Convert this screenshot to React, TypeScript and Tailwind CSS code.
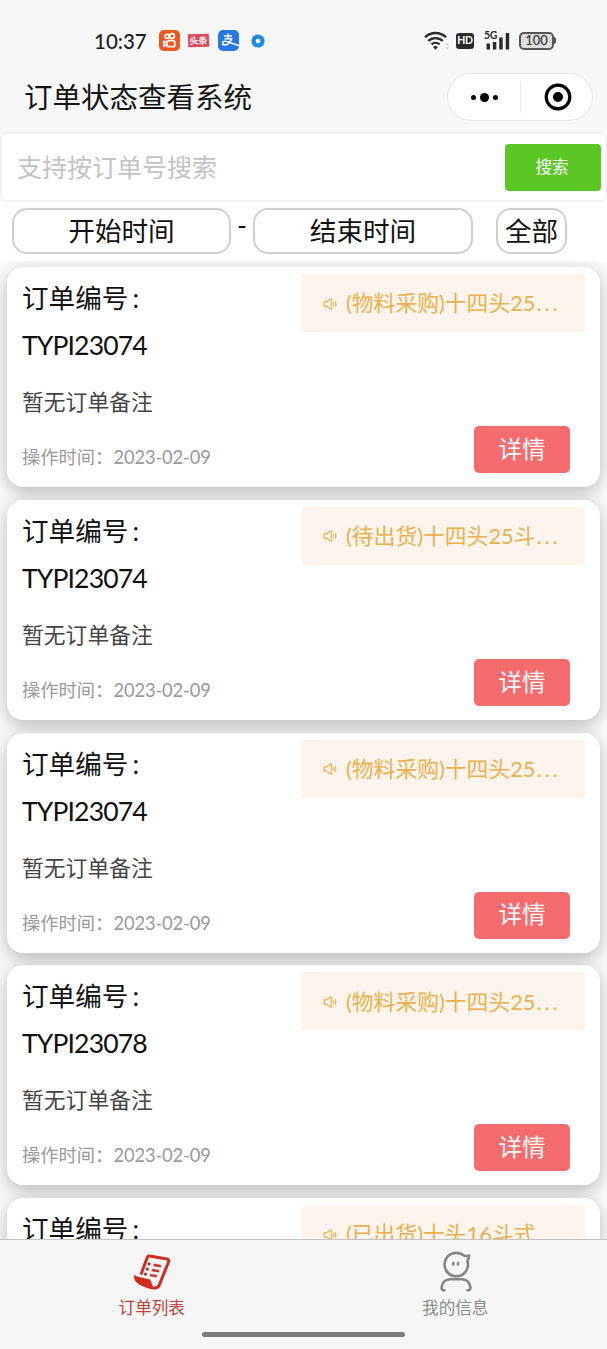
type Order = {
  id?: string;
  status: string;
  more?: boolean;
  remark?: string;
  date?: string;
};

const orders: Order[] = [
  { id: 'TYPI23074', status: '(物料采购)十四头25', more: true, remark: '暂无订单备注', date: '2023-02-09' },
  { id: 'TYPI23074', status: '(待出货)十四头25斗', more: true, remark: '暂无订单备注', date: '2023-02-09' },
  { id: 'TYPI23074', status: '(物料采购)十四头25', more: true, remark: '暂无订单备注', date: '2023-02-09' },
  { id: 'TYPI23078', status: '(物料采购)十四头25', more: true, remark: '暂无订单备注', date: '2023-02-09' },
  { status: '(已出货)十头16斗式' },
];

function StatusBar() {
  return (
    <div className="flex h-[62px] items-center justify-between pt-[19px] pr-[51px] pl-[94px]">
      <div className="flex items-center">
        <span className="w-[65px] text-[20.5px] leading-6 font-medium text-[#1c1c1c]">10:37</span>
        {/* Kuaishou */}
        <svg width="21" height="21" viewBox="0 0 21 21">
          <rect width="21" height="21" rx="5" fill="#f0561d" />
          <g fill="none" stroke="#fff" strokeWidth="1.7">
            <circle cx="8" cy="6.3" r="2" />
            <circle cx="13" cy="6" r="2.4" />
            <rect x="7.8" y="10.7" width="8" height="6" rx="1.8" />
            <path d="M7.8 12.6l-3-1.3v4.8l3-1.2" />
          </g>
        </svg>
        {/* Toutiao */}
        <span className="ml-[8px] flex h-[13px] w-[21px] -rotate-2 items-center justify-center bg-[#e0485a] text-[9px] leading-none font-bold text-white">
          头条
        </span>
        {/* Alipay */}
        <svg className="ml-[9px]" width="21" height="21" viewBox="0 0 21 21">
          <rect width="21" height="21" rx="5" fill="#2877e6" />
          <g fill="none" stroke="#fff" strokeWidth="1.6">
            <path d="M6 6h8M10.2 3.500v5.200M6.500 8.800h7c-.7 2.500-3.300 6.200-6.500 6.200-3.300 0-3.200-3.700-.2-3.700 3 0 6.400 2.300 14.200 4.300" />
          </g>
        </svg>
        <svg className="ml-[12px]" width="14" height="14" viewBox="0 0 14 14">
          <circle cx="7" cy="7" r="6.6" fill="#1c8ae6" />
          <circle cx="7" cy="7" r="2.3" fill="#fff" />
        </svg>
      </div>

      <div className="flex items-center">
        <svg width="25" height="20" viewBox="0 0 25 20">
          <g fill="none" stroke="#2b2b2b" strokeWidth="2.3">
            <path d="M1 6.3a15 15 0 0 1 21 0" />
            <path d="M4.2 10a10.5 10.5 0 0 1 14.600 0" />
            <path d="M7.500 13.400a6 6 0 0 1 8 0" />
          </g>
          <path d="M9 16a4 4 0 0 1 5 0l-2.500 2.800z" fill="#2b2b2b" />
          <path d="M21.500 14l1.800-2.200 1.700 2.200zM21.500 16l1.800 2.200 1.700-2.200z" fill="#cfcfcf" />
        </svg>
        <span className="ml-[7px] flex h-[16px] w-[18px] items-center justify-center rounded-[3px] bg-[#2b2b2b] text-[10.5px] leading-none font-bold tracking-[-0.3px] text-white">
          HD
        </span>
        <div className="relative ml-[10px] h-[20px] w-[27px]">
          <span className="absolute -top-px left-0 text-[10.5px] leading-[10px] font-bold tracking-[-0.3px] text-[#2b2b2b]">5G</span>
          <svg className="absolute top-0 left-0" width="27" height="20" viewBox="0 0 27 20" fill="#2b2b2b">
            <rect x="2.500" y="12.500" width="3.500" height="6" />
            <rect x="8.800" y="11" width="3.500" height="7.500" />
            <rect x="15.200" y="6.500" width="3.500" height="12" />
            <rect x="21.700" y="2" width="3.500" height="16.500" />
          </svg>
        </div>
        <div className="ml-[8px] flex items-center">
          <span className="flex h-[18px] w-[35px] items-center justify-center rounded-[5px] border-2 border-[#555] bg-[#dedede] text-[13px] leading-none font-medium text-[#333]">
            100
          </span>
          <span className="h-[7px] w-[2px] rounded-r-sm bg-[#555]" />
        </div>
      </div>
    </div>
  );
}

function TitleBar() {
  return (
    <div className="flex h-[70px] items-center justify-between pr-[14px] pl-6">
      <h1 className="pt-px text-[28.5px] leading-none text-[#151515]">订单状态查看系统</h1>
      <div className="flex h-[48px] w-[146px] items-center rounded-full border border-[#e7e7e7] bg-white">
        <div className="flex h-[32px] w-[73px] items-center justify-center gap-[4px] border-r border-[#e9e9e9]">
          <span className="size-[5px] rounded-full bg-black" />
          <span className="size-[9px] rounded-full bg-black" />
          <span className="size-[5px] rounded-full bg-black" />
        </div>
        <div className="flex flex-1 justify-center pl-[2px]">
          <svg width="28" height="28" viewBox="0 0 28 28">
            <circle cx="14" cy="14" r="11.8" fill="none" stroke="#000" strokeWidth="3.2" />
            <circle cx="14" cy="14" r="5" />
          </svg>
        </div>
      </div>
    </div>
  );
}

function SpeakerIcon() {
  return (
    <svg className="mr-[9px] shrink-0" width="14" height="14" viewBox="0 0 14 14" fill="none" stroke="#eab04c" strokeWidth="1.2">
      <path d="M1.200 4.800h2.200L8.300 1.800v10.400L3.400 9.200H1.200z" strokeLinejoin="round" />
      <path d="M10 5.400a2.500 2.500 0 0 1 0 3.200M11.700 4.200a4.200 4.200 0 0 1 0 5.600" />
    </svg>
  );
}

function OrderCard({ order }: { order: Order }) {
  return (
    <div className="flex h-[220px] shrink-0 justify-between rounded-[16px] bg-white pr-[15px] pl-[15px] shadow-[0_5px_18px_rgba(0,0,0,0.26)]">
      <div className="flex flex-col pt-[8px]">
        <div className="text-[26.6px] leading-[47px] text-[#111]">
          <p>
            订单编号<span className="ml-[4px]">:</span>
          </p>
          {order.id && <p className="tracking-[-0.9px]">{order.id}</p>}
        </div>
        {order.remark && <p className="mt-[17px] text-[21.8px] leading-[32px] text-[#444]">{order.remark}</p>}
        {order.date && (
          <p className="mt-[26px] text-[18.3px] leading-[26px] text-[#999]">
            操作时间：<span className="tracking-[-0.100px]">{order.date}</span>
          </p>
        )}
      </div>
      <div className="flex w-[283px] flex-col pt-[7px]">
        <div className="flex h-[58px] items-center bg-[#fdf4ed] pt-px pl-[21px] text-[21.8px] whitespace-nowrap text-[#eab04c]">
          <SpeakerIcon />
          <span>
            {order.status}
            {order.more && <span className="ml-px tracking-[2.8px]">...</span>}
          </span>
        </div>
        {order.id && (
          <button className="mt-[94px] mr-[15px] flex h-[47px] w-[96px] items-center justify-center self-end rounded-[5px] bg-[#f56c6e] text-[23.5px] leading-none text-white">
            详情
          </button>
        )}
      </div>
    </div>
  );
}

function TabBar() {
  return (
    <div className="relative z-10 h-[110px] shrink-0 border-t border-[#c4c4c4] bg-[#f6f6f7]">
      <div className="grid grid-cols-2 text-[16.6px] leading-6">
        <div className="flex flex-col items-center pt-[11px] text-[#c0423a]">
          <svg width="40" height="42" viewBox="0 0 40 42" fill="none">
            <path d="M9 23.500L15.300 6.300Q15.800 4.800 17.500 5L35 8Q37.400 8.600 36.600 10.800L27.300 34Q25.600 37.600 21.500 36.800" stroke="#cf2d20" strokeWidth="3" strokeLinejoin="round" />
            <path d="M2 24c3 1.900 8.500 3 15.300 4.300 2.400.700 1.200 5 5.700 9.700-4 .8-7-.6-10.500-2C6 33.500 1.500 30.500 2 24z" fill="#d42a1c" />
            <path d="M15.800 12.800l2.600.4M14 17.900l2.600.4M12.200 22.900l2.600.4" stroke="#973244" strokeWidth="2.800" />
            <path d="M21.500 13.900l7.500 1.300M19.700 19l7.500 1.300M17.900 24l7 1.300" stroke="#cf3a2e" strokeWidth="2.600" />
          </svg>
          <span className="mt-[3px]">订单列表</span>
        </div>
        <div className="flex flex-col items-center pt-[11px] text-[#8c8c8c]">
          <svg width="40" height="42" viewBox="0 0 40 42" fill="none" stroke="#858585" strokeWidth="2.6" strokeLinecap="round" strokeLinejoin="round">
            <path d="M27.800 3.900A11.700 11.700 0 1 0 32.400 10Q33.900 7.600 34.200 4.600Q30.500 5.600 27.800 3.900z" />
            <path d="M18.300 12v1.600M23 12v1.600" strokeWidth="2.500" />
            <path d="M9.500 39.300Q6.500 39.500 6.500 36.500C7.200 31.500 10.500 28.300 15 28.300H27C31.500 28.300 34.800 31.500 35.500 36.500Q35.500 39.500 32.500 39.300" />
          </svg>
          <span className="mt-[3px]">我的信息</span>
        </div>
      </div>
      {/* home indicator */}
      <div className="mx-auto mt-[12px] h-[5px] w-[203px] rounded-full bg-[#7b7b7b]" />
    </div>
  );
}

export default function App() {
  return (
    <div className="flex h-[1349px] w-[607px] flex-col overflow-hidden bg-white font-['Lato','Noto_Sans_CJK_SC',sans-serif]">
      <header className="h-[132px] shrink-0 bg-[#f7f7f7]">
        <StatusBar />
        <TitleBar />
      </header>

      {/* search */}
      <div className="flex h-[70px] shrink-0 items-center justify-between rounded-[6px] border-2 border-[#f2f2f2] pr-1 pl-[15px]">
        <span className="text-[25px] leading-none text-[#c3c3c3]">支持按订单号搜索</span>
        <button className="flex h-[47px] w-[96px] items-center justify-center rounded-[4px] bg-[#5ac725] pr-[2px] text-[16.6px] leading-none text-white">
          搜索
        </button>
      </div>

      {/* filters */}
      <div className="flex h-[59px] shrink-0 pt-[6px] pl-[12px] text-[26.6px] leading-none text-[#111]">
        <div className="flex h-[46px] w-[219px] items-center justify-center rounded-[15px] border-2 border-[#cfcfcf] pt-px">开始时间</div>
        <span className="w-[22px] pt-[4px] text-center">-</span>
        <div className="flex h-[46px] w-[220px] items-center justify-center rounded-[15px] border-2 border-[#cfcfcf] pt-px">结束时间</div>
        <div className="ml-[23px] flex h-[46px] w-[71px] items-center justify-center rounded-[15px] border-2 border-[#cfcfcf] pt-px">全部</div>
      </div>

      <main className="flex min-h-0 flex-1 flex-col gap-[12.8px] overflow-hidden bg-[#fafafa] pt-[6px] pr-[7px] pl-[7px]">
        {orders.map((order, i) => (
          <OrderCard key={i} order={order} />
        ))}
      </main>

      <TabBar />
    </div>
  );
}
